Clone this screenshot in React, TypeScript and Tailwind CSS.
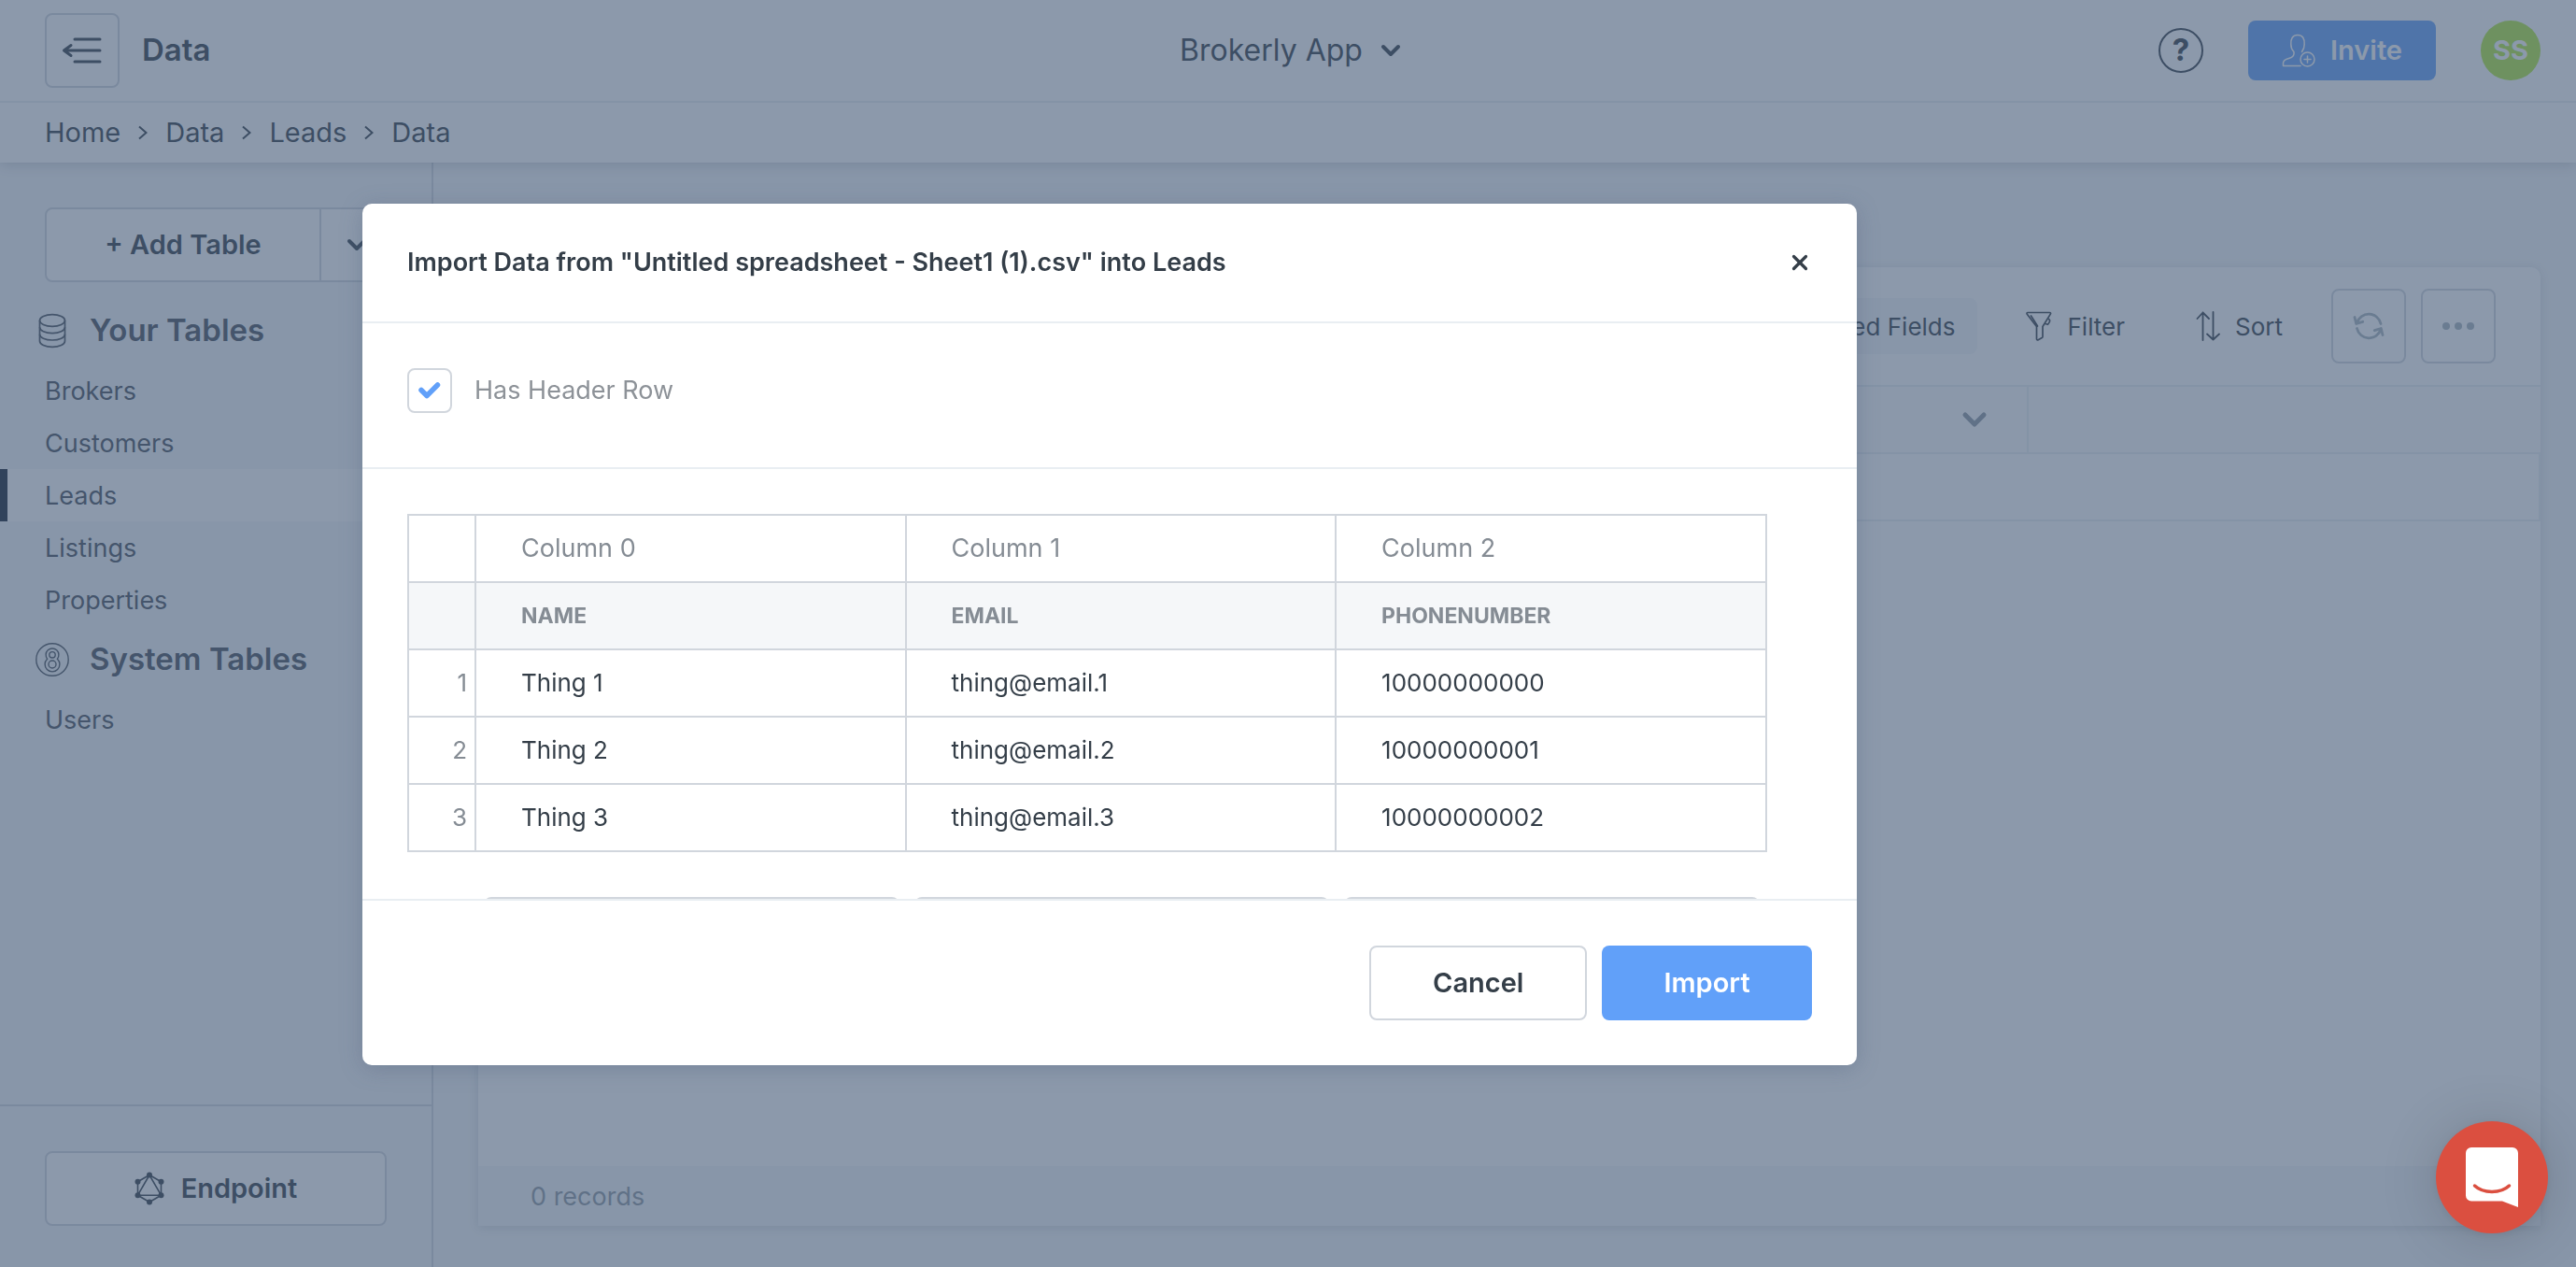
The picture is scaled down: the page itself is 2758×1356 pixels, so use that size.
import { ChevronDown, X } from "lucide-react";
import type { ReactNode } from "react";

const tables = ["Brokers", "Customers", "Leads", "Listings", "Properties"];
const crumbs = ["Home", "Data", "Leads", "Data"];
const columns = ["NAME", "EMAIL", "PHONENUMBER"];
const rows = [
  ["Thing 1", "thing@email.1", "10000000000"],
  ["Thing 2", "thing@email.2", "10000000001"],
  ["Thing 3", "thing@email.3", "10000000002"],
];

function MenuIcon() {
  return (
    <svg width="44" height="30" viewBox="0 0 44 30" fill="none" stroke="currentColor" strokeWidth="3" strokeLinecap="round" strokeLinejoin="round">
      <path d="M14 3h27M3 15h38M14 27h27M10 9.500L2.500 15l7.500 5.500" />
    </svg>
  );
}

function DatabaseIcon() {
  return (
    <svg width="30" height="38" viewBox="0 0 30 38" fill="none" stroke="currentColor" strokeWidth="1.700">
      <ellipse cx="15" cy="8" rx="13.500" ry="6.300" />
      <path d="M1.500 8v22c0 3.500 6 6.300 13.500 6.300s13.500-2.800 13.500-6.300V8" />
      <path d="M1.500 15.300c0 3.500 6 6.300 13.500 6.300s13.500-2.800 13.500-6.300M1.500 22.700c0 3.500 6 6.300 13.500 6.300s13.500-2.800 13.500-6.300" />
    </svg>
  );
}

function EightIcon() {
  return (
    <svg width="36" height="36" viewBox="0 0 36 36" fill="none" stroke="currentColor" strokeWidth="1.400">
      <circle cx="18" cy="18" r="17.200" />
      <path d="M12.600 17.200a6.900 6.900 0 1 1 10.800 0a7.900 7.900 0 1 1-10.800 0z" />
      <circle cx="18" cy="12.800" r="3.200" />
      <circle cx="18" cy="23" r="4" />
    </svg>
  );
}

function InviteIcon() {
  return (
    <svg width="36" height="36" viewBox="0 0 36 36" fill="none" stroke="currentColor" strokeWidth="1.500" strokeLinecap="round" strokeLinejoin="round">
      <path d="M20 34.500H1.500v-3c0-3 2.500-4 6-5s5.500-2.400 5.500-5v-2c-2-2-3.200-4.500-3.200-8C9.500 5.500 11.500 1.500 17 1.500s7.500 4 7.200 10c0 3.500-1.200 6-2.700 8" />
      <circle cx="27.500" cy="27.500" r="7.500" />
      <path d="M27.500 24v7M24 27.500h7" />
    </svg>
  );
}

function FilterIcon() {
  return (
    <svg width="28" height="32" viewBox="0 0 28 32" fill="none" stroke="currentColor" strokeWidth="1.700" strokeLinecap="round" strokeLinejoin="round">
      <path d="M2 1.500h23.500c1 0 1.300.8.800 1.600L18 16.500v10.800c0 .6-.3 1-.8 1.300l-4 2.200c-.8.400-1.700 0-1.700-1V16.500L1.300 3.200C.8 2.400 1 1.500 2 1.500z" />
      <path d="M5.500 5l7 11M24.500 8.500c1.800 1 1.500 3-1 5.800l-2.700-.8" />
    </svg>
  );
}

function SortIcon() {
  return (
    <svg width="26" height="32" viewBox="0 0 26 32" fill="none" stroke="currentColor" strokeWidth="1.800" strokeLinecap="round" strokeLinejoin="round">
      <path d="M7.500 31V1.500M1.500 8l6-6.500L14 8M18.500 1v29.500M12 24.500l6.500 6 6.500-6" />
    </svg>
  );
}

function RefreshIcon() {
  return (
    <svg width="34" height="34" viewBox="0 0 34 34" fill="none" stroke="currentColor" strokeWidth="2.800" strokeLinecap="round" strokeLinejoin="round">
      <path d="M30 14.500A13.200 13.200 0 0 0 4.500 13.500M2 7.500l1.700 7 7-2.200M4.500 19.500a13.200 13.200 0 0 0 25.500 1M32 26.500l-1.700-7-7 2.200" />
    </svg>
  );
}

function GraphIcon() {
  return (
    <svg width="32" height="36" viewBox="0 0 32 36" fill="none" stroke="currentColor" strokeWidth="1.600">
      <path d="M16 3.500l12.500 7.300v14.400L16 32.500 3.500 25.200V10.800zM16 3.500L3.500 25.200h25z" />
      <g fill="currentColor" stroke="none">
        <circle cx="16" cy="3.500" r="3" />
        <circle cx="28.500" cy="10.800" r="3" />
        <circle cx="28.500" cy="25.200" r="3" />
        <circle cx="16" cy="32.500" r="3" />
        <circle cx="3.500" cy="25.200" r="3" />
        <circle cx="3.500" cy="10.800" r="3" />
      </g>
    </svg>
  );
}

function CrumbArrow() {
  return (
    <svg width="10" height="16" viewBox="0 0 10 16" fill="none" stroke="currentColor" strokeWidth="2">
      <path d="M1 1.500L8.500 8 1 14.500" />
    </svg>
  );
}

function TopBar() {
  return (
    <header className="grid grid-cols-[1fr_auto_1fr] items-center border-b-2 border-[#e9eef2] pt-3.5 pr-[38px] pb-3.5 pl-12">
      <div className="flex items-center gap-6">
        <button aria-label="Collapse menu" className="flex size-20 items-center justify-center rounded-lg border-2 border-[#d1d6dd]">
          <MenuIcon />
        </button>
        <h1 className="text-[33px] font-semibold">Data</h1>
      </div>
      <button className="flex items-center gap-3.5 text-[32px]">
        Brokerly App
        <ChevronDown size={32} strokeWidth={3} />
      </button>
      <div className="flex items-center justify-end gap-12">
        <button aria-label="Help" className="flex size-12 items-center justify-center rounded-full border-2 border-[#323c47] text-[33px] font-bold">
          ?
        </button>
        <button className="flex h-16 items-center gap-4 rounded-lg bg-[#61a0f9] px-9 text-[29px] font-semibold text-white">
          <InviteIcon />
          Invite
        </button>
        <button aria-label="Account" className="flex size-16 items-center justify-center rounded-full bg-[#b0ea3c] text-[29px] font-bold text-white">
          SS
        </button>
      </div>
    </header>
  );
}

function Breadcrumbs() {
  return (
    <nav aria-label="Breadcrumb" className="flex h-16 items-center gap-[19px] pl-12 text-[29px]">
      {crumbs.map((crumb, i) => (
        <span key={i} className="flex items-center gap-[19px]">
          {i > 0 && <CrumbArrow />}
          <a href="#">{crumb}</a>
        </span>
      ))}
    </nav>
  );
}

function GroupHeading({ icon, children }: { icon: ReactNode; children: ReactNode }) {
  return (
    <h2 className="flex h-[72px] items-center gap-[22px] pl-[38px] text-[33px] font-semibold">
      <span className="flex w-9 justify-center">{icon}</span>
      {children}
    </h2>
  );
}

function TableLink({ name, active }: { name: string; active?: boolean }) {
  return (
    <li>
      <a
        href="#"
        className={
          active
            ? "flex h-14 items-center border-l-8 border-[#142032] bg-white pt-0.5 pl-10 text-[27px]"
            : "flex h-14 items-center border-l-8 border-transparent pt-0.5 pl-10 text-[27px]"
        }
      >
        {name}
      </a>
    </li>
  );
}

function Sidebar() {
  return (
    <aside className="flex w-[464px] shrink-0 flex-col border-r-2 border-[#d1d6dd] text-[#46505b]">
      <div className="mx-12 mt-12 mb-4 flex h-20 rounded-lg border-2 border-[#d1d6dd] bg-white text-[#323c47]">
        <button className="flex-1 border-r-2 border-[#d1d6dd] text-[29px] font-semibold">+ Add Table</button>
        <button aria-label="More table options" className="flex w-[68px] items-center justify-center pl-2">
          <ChevronDown size={32} strokeWidth={3} />
        </button>
      </div>
      <GroupHeading icon={<DatabaseIcon />}>Your Tables</GroupHeading>
      <ul>
        {tables.map((name) => (
          <TableLink key={name} name={name} active={name === "Leads"} />
        ))}
      </ul>
      <GroupHeading icon={<EightIcon />}>System Tables</GroupHeading>
      <ul>
        <TableLink name="Users" />
      </ul>
      <div className="mt-auto border-t-2 border-[#d1d6dd] px-12 pt-12 pb-11 text-[#323c47]">
        <button className="flex h-20 w-full items-center justify-center gap-[18px] rounded-lg border-2 border-[#d1d6dd] bg-white text-[29px] font-semibold">
          <GraphIcon />
          Endpoint
        </button>
      </div>
    </aside>
  );
}

function DataPanel() {
  return (
    <main className="flex flex-1 flex-col pt-28 pr-[38px] pb-11 pl-12">
      <section className="flex flex-1 flex-col overflow-hidden rounded-t-[10px] bg-white shadow-[0_2px_12px_rgba(40,60,80,0.160)]">
        <div className="flex h-32 shrink-0 items-center justify-end gap-7 border-b-2 border-[#e9eef2] pr-12 text-[26px]">
          <button className="h-[60px] rounded-lg bg-[#f5f7f9] px-6">Linked Fields</button>
          <button className="flex items-center gap-4 px-6">
            <FilterIcon />
            Filter
          </button>
          <button className="flex items-center gap-4 px-6">
            <SortIcon />
            Sort
          </button>
          <div className="flex gap-4 text-[#a6b3bc]">
            <button aria-label="Refresh" className="flex size-20 items-center justify-center rounded-lg border-2 border-[#d1d6dd]">
              <RefreshIcon />
            </button>
            <button aria-label="More" className="flex size-20 items-center justify-center gap-[5px] rounded-lg border-2 border-[#d1d6dd]">
              <span className="size-2 rounded-full bg-current" />
              <span className="size-2 rounded-full bg-current" />
              <span className="size-2 rounded-full bg-current" />
            </button>
          </div>
        </div>
        <div className="flex h-[72px] shrink-0 border-b-2 border-[#e9eef2] bg-[#fbfcfc] pr-[548px]">
          <div className="flex flex-1 items-center justify-end border-r-2 border-[#e9eef2] pr-9 text-[#8c97a2]">
            <ChevronDown size={40} strokeWidth={3} />
          </div>
        </div>
        <div className="h-[72px] shrink-0 border-r-2 border-b-2 border-[#e9eef2]" />
        <footer className="mt-auto flex h-16 items-center bg-[#f5f7f9] pt-0.5 pl-14 text-[27px] text-[#8c97a2]">0 records</footer>
      </section>
    </main>
  );
}

function ImportTable() {
  return (
    <table className="w-full table-fixed border-collapse text-left text-[26px] text-[#343e48]">
      <colgroup>
        <col className="w-[72px]" />
        <col />
        <col />
        <col />
      </colgroup>
      <thead>
        <tr className="h-[72px] text-[27px] text-[#858c94]">
          <td className="border-2 border-[#d1d6dd]" />
          {columns.map((name, i) => (
            <th key={name} scope="col" className="border-2 border-[#d1d6dd] pl-12 font-normal">
              Column {i}
            </th>
          ))}
        </tr>
        <tr className="h-[72px] bg-[#f5f7f9] text-[23px] text-[#858c94]">
          <td className="border-2 border-[#d1d6dd]" />
          {columns.map((name) => (
            <th key={name} scope="col" className="border-2 border-[#d1d6dd] pl-12 font-bold">
              {name}
            </th>
          ))}
        </tr>
      </thead>
      <tbody>
        {rows.map((row, i) => (
          <tr key={row[0]} className="h-[72px]">
            <th scope="row" className="border-2 border-[#d1d6dd] pr-2 text-right font-normal text-[#858c94]">
              {i + 1}
            </th>
            {row.map((cell) => (
              <td key={cell} className="border-2 border-[#d1d6dd] pl-12">
                {cell}
              </td>
            ))}
          </tr>
        ))}
      </tbody>
    </table>
  );
}

function ImportDialog() {
  return (
    <div role="dialog" aria-modal="true" aria-labelledby="import-title" className="flex max-h-[68vh] w-[58vw] flex-col rounded-[10px] bg-white text-[#343e48] shadow-[0_4px_24px_rgba(68,89,118,0.300)]">
      <div className="flex h-32 shrink-0 items-center justify-between border-b-2 border-[#e9eef2] px-12">
        <h2 id="import-title" className="text-[27px] font-semibold">
          Import Data from "Untitled spreadsheet - Sheet1 (1).csv" into Leads
        </h2>
        <button aria-label="Close">
          <X size={26} strokeWidth={3} />
        </button>
      </div>
      <div className="min-h-0 flex-1 overflow-y-auto [scrollbar-width:none]">
        <div className="border-b-2 border-[#e9eef2] px-12 pt-12 pb-[58px]">
          <label className="flex items-center gap-6 text-[27px] text-[#8d9298]">
            <span className="relative flex size-12">
              <input type="checkbox" defaultChecked className="peer size-12 appearance-none rounded-lg border-2 border-[#d1d6dd]" />
              <svg width="24" height="20" viewBox="0 0 24 20" fill="none" stroke="#61a0f9" strokeWidth="5.500" strokeLinecap="round" strokeLinejoin="round" className="pointer-events-none absolute inset-0 m-auto hidden peer-checked:block">
                <path d="M3 9.500l6 6L20.500 4" />
              </svg>
            </span>
            Has Header Row
          </label>
        </div>
        <div className="py-12 pr-24 pl-12">
          <ImportTable />
          <div className="mt-12 flex gap-4 pr-2 pl-[82px]">
            {columns.map((name) => (
              <select key={name} aria-label={name} className="h-20 min-w-0 flex-1 appearance-none rounded-lg border-2 border-[#d1d6dd] px-6 text-[26px]">
                <option>Do not import</option>
              </select>
            ))}
          </div>
        </div>
      </div>
      <div className="flex shrink-0 justify-end gap-4 border-t-2 border-[#e9eef2] p-12 text-[29px] font-semibold">
        <button className="h-20 rounded-lg border-2 border-[#d1d6dd] px-[66px]">Cancel</button>
        <button className="h-20 rounded-lg bg-[#61a0f9] px-[66px] text-white">Import</button>
      </div>
    </div>
  );
}

function ChatButton() {
  return (
    <button aria-label="Open chat" className="fixed right-[30px] bottom-9 flex size-30 items-center justify-center rounded-full bg-[#db4f40] shadow-[0_2px_12px_rgba(0,0,0,0.060),0_4px_64px_rgba(0,0,0,0.160)]">
      <svg width="56" height="64" viewBox="0 0 56 64">
        <path d="M6 0h44a6 6 0 0 1 6 6v58l-17-6.500H6a6 6 0 0 1-6-6V6a6 6 0 0 1 6-6z" fill="#fff" />
        <path d="M9.500 41c9 8.500 28 8.500 37 0" fill="none" stroke="#db4f40" strokeWidth="3.500" strokeLinecap="round" />
      </svg>
    </button>
  );
}

export default function App() {
  return (
    <div className="flex h-screen flex-col overflow-hidden bg-[#f5f7f9] font-[Inter,sans-serif] text-[#323c47]">
      <div className="relative bg-white shadow-[0_2px_14px_rgba(30,50,70,0.220)]">
        <TopBar />
        <Breadcrumbs />
      </div>
      <div className="flex min-h-0 flex-1">
        <Sidebar />
        <DataPanel />
      </div>
      <div className="fixed inset-0 flex items-center bg-[rgba(68,89,118,0.614)] pt-0.5 pl-[388px]">
        <ImportDialog />
      </div>
      <ChatButton />
    </div>
  );
}
